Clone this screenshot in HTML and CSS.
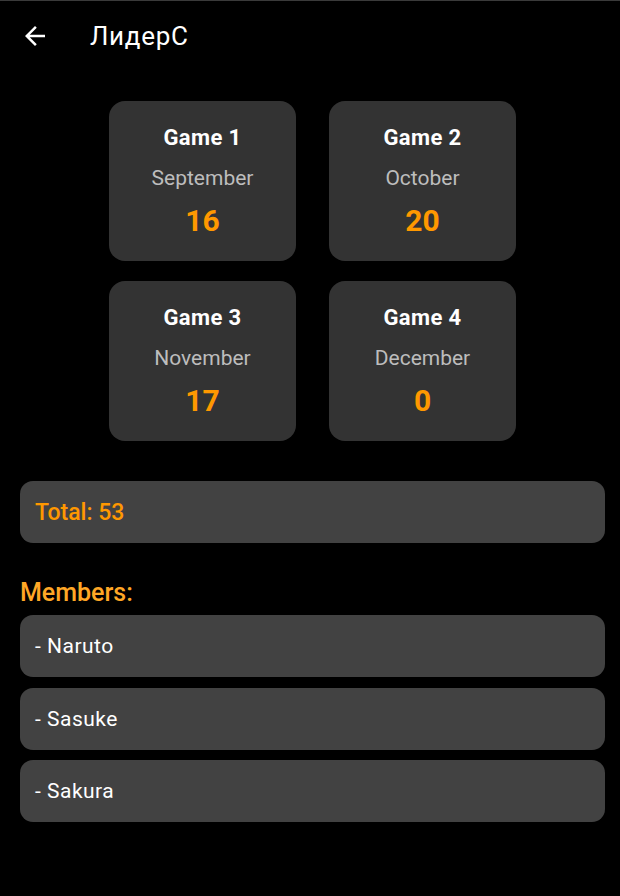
FILE: index.html
```html
<!DOCTYPE html>
<html>
<head>
<meta charset="utf-8">
<link rel="stylesheet" href="styles.css">
</head>
<body>
<div class="topline"></div>
<header class="appbar">
  <span class="back">
    <svg width="30" height="30" viewBox="0 0 24 24"><path d="M20 11H7.83l5.59-5.59L12 4l-8 8 8 8 1.41-1.41L7.83 13H20v-2z" fill="#fff"/></svg>
  </span>
  <h1 class="title">ЛидерС</h1>
</header>
<main class="content">
  <div class="grid">
    <div class="card"><div class="game">Game 1</div><div class="month">September</div><div class="score">16</div></div>
    <div class="card"><div class="game">Game 2</div><div class="month">October</div><div class="score">20</div></div>
    <div class="card"><div class="game">Game 3</div><div class="month">November</div><div class="score">17</div></div>
    <div class="card"><div class="game">Game 4</div><div class="month">December</div><div class="score">0</div></div>
  </div>
  <div class="row total">Total: 53</div>
  <div class="members-label">Members:</div>
  <div class="list">
    <div class="row member">- Naruto</div>
    <div class="row member">- Sasuke</div>
    <div class="row member">- Sakura</div>
  </div>
</main>
</body>
</html>
```
FILE: styles.css
```css
html, body {
  margin: 0;
  padding: 0;
  background: #000;
  font-family: Roboto, "Noto Sans", sans-serif;
  color: #fff;
}
.topline {
  height: 1px;
  background: #3a3a3a;
}
.appbar {
  height: 70px;
  display: flex;
  align-items: center;
  padding-left: 20px;
}
.back {
  display: flex;
  width: 30px;
  height: 30px;
}
.title {
  margin: 0 0 0 40px;
  font-size: 26px;
  line-height: 32px;
  font-weight: 400;
  letter-spacing: 0.7px;
}
.content {
  padding: 30px 15px 0 20px;
}
.grid {
  display: grid;
  grid-template-columns: 187px 187px;
  column-gap: 33px;
  row-gap: 20px;
  justify-content: center;
}
.card {
  height: 160px;
  background: #333333;
  border-radius: 16px;
  display: flex;
  flex-direction: column;
  align-items: center;
  box-sizing: border-box;
  padding-top: 22.5px;
}
.game {
  font-size: 22px;
  font-weight: 700;
  line-height: 28px;
  letter-spacing: 0.4px;
}
.month {
  margin-top: 13.3px;
  font-size: 21px;
  color: #bdbdbd;
  line-height: 26px;
}
.score {
  margin-top: 12px;
  font-size: 30px;
  font-weight: 700;
  color: #ff9800;
  line-height: 36px;
}
.row {
  height: 62px;
  background: #424242;
  border-radius: 13px;
  display: flex;
  align-items: center;
  padding-left: 15px;
}
.total {
  margin-top: 40px;
  color: #ff9800;
  font-weight: 500;
  font-size: 23px;
}
.members-label {
  margin-top: 34.5px;
  font-size: 25px;
  font-weight: 500;
  color: #ffa726;
  line-height: 30px;
}
.list {
  margin-top: 7.5px;
  display: flex;
  flex-direction: column;
  gap: 10.5px;
}
.member {
  color: #fff;
  font-size: 21px;
  letter-spacing: 0.5px;
}
```
